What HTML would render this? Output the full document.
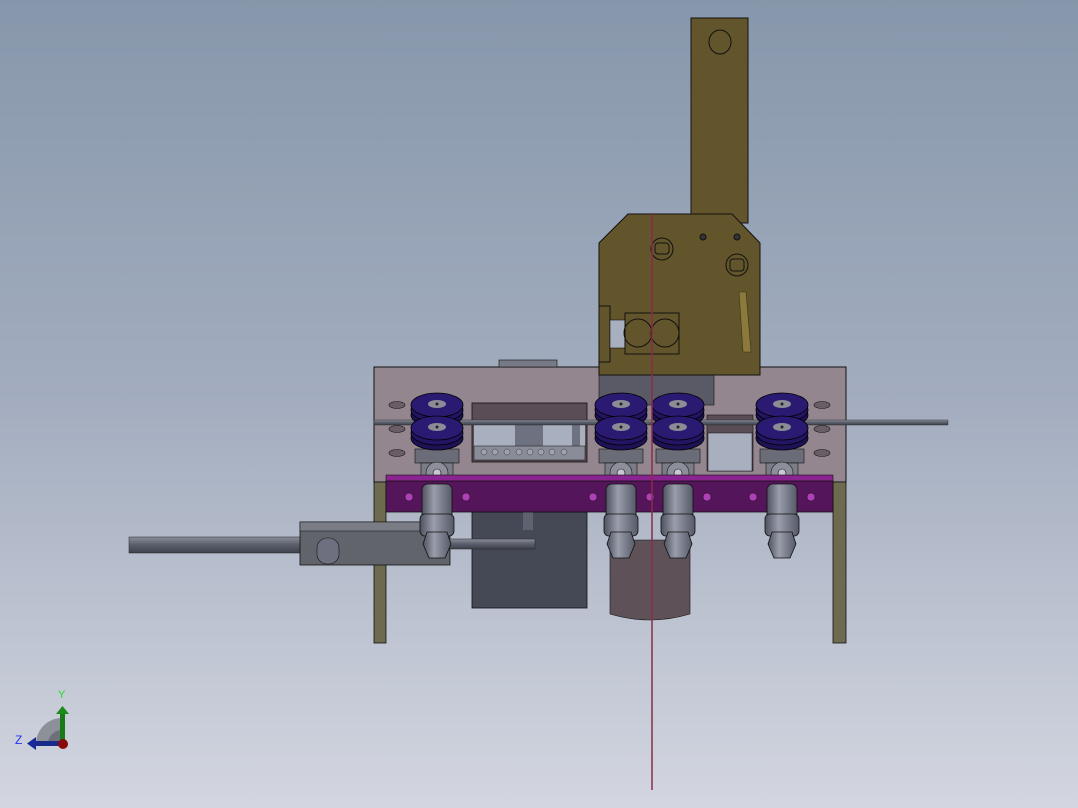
<!DOCTYPE html>
<html><head><style>html,body{margin:0;padding:0;width:1078px;height:808px;overflow:hidden}</style></head>
<body>
<svg width="1078" height="808" viewBox="0 0 1078 808" xmlns="http://www.w3.org/2000/svg">
<defs>
<linearGradient id="bg" x1="0" y1="0" x2="0" y2="1"><stop offset="0" stop-color="#8797ab"/><stop offset="0.5" stop-color="#a3adbf"/><stop offset="1" stop-color="#d3d6e0"/></linearGradient>
<linearGradient id="cyl" x1="0" y1="0" x2="1" y2="0"><stop offset="0" stop-color="#4e5260"/><stop offset="0.4" stop-color="#9a9eab"/><stop offset="1" stop-color="#555968"/></linearGradient>
<linearGradient id="rod" x1="0" y1="0" x2="0" y2="1"><stop offset="0" stop-color="#8a8e9a"/><stop offset="0.5" stop-color="#5a5e6a"/><stop offset="1" stop-color="#3e424c"/></linearGradient>
<g id="pul"><ellipse cx="0" cy="10" rx="26" ry="12" fill="#1e1256" stroke="#000" stroke-width="0.8"/><ellipse cx="0" cy="5" rx="26" ry="12" fill="#241564" stroke="#000" stroke-width="0.8"/><ellipse cx="0" cy="0" rx="26" ry="12" fill="#2b1a72" stroke="#000" stroke-width="0.8"/><ellipse cx="0" cy="-1" rx="9" ry="4" fill="#8c8c96"/><circle cx="0" cy="-1" r="1.5" fill="#222"/></g>
<g id="cy"><rect x="-15" y="0" width="30" height="45" rx="6" fill="url(#cyl)" stroke="#111" stroke-width="0.8"/><rect x="-17" y="30" width="34" height="22" rx="5" fill="url(#cyl)" stroke="#111" stroke-width="0.8"/><path d="M-10 48 h20 l4 12 l-6 14 h-16 l-6-14z" fill="url(#cyl)" stroke="#111" stroke-width="0.8"/></g>
<g id="blk"><rect x="-22" y="0" width="44" height="14" fill="#6a6c78" stroke="#111" stroke-width="0.6"/><rect x="-16" y="14" width="32" height="22" fill="#7a7c88" stroke="#111" stroke-width="0.6"/><circle cx="0" cy="24" r="11" fill="#8c8e9a" stroke="#111" stroke-width="0.6"/><circle cx="0" cy="24" r="4" fill="#c8c8d0" stroke="#111" stroke-width="0.6"/></g>
</defs>
<rect width="1078" height="808" fill="url(#bg)"/>
<!-- arm -->
<rect x="691" y="18" width="57" height="205" fill="#63552b" stroke="#111" stroke-width="1"/>
<ellipse cx="720" cy="42" rx="11" ry="12" fill="none" stroke="#111"/>
<!-- back plate -->
<rect x="374" y="367" width="472" height="115" fill="#93868f" stroke="#111" stroke-width="1"/>
<rect x="499" y="360" width="58" height="7" fill="#777a86" stroke="#111" stroke-width="0.6"/>
<rect x="599" y="375" width="115" height="30" fill="#5a5a66" stroke="#111" stroke-width="0.6"/>
<!-- plate holes -->
<g fill="#6a5e66" stroke="#111" stroke-width="0.6">
<ellipse cx="397" cy="405" rx="8" ry="3.5"/><ellipse cx="397" cy="429" rx="8" ry="3.5"/><ellipse cx="397" cy="453" rx="8" ry="3.5"/>
<ellipse cx="822" cy="405" rx="8" ry="3.5"/><ellipse cx="822" cy="429" rx="8" ry="3.5"/><ellipse cx="822" cy="453" rx="8" ry="3.5"/></g>
<!-- window -->
<rect x="472" y="403" width="115" height="59" fill="#5a4d55" stroke="#111" stroke-width="0.8"/>
<rect x="474" y="420" width="111" height="40" fill="#a8b0c0"/>
<rect x="515" y="425" width="28" height="25" fill="#6e7280"/>
<rect x="572" y="425" width="8" height="30" fill="#6e7280"/>
<rect x="474" y="446" width="111" height="14" fill="#8a8c98" stroke="#111" stroke-width="0.5"/>
<g fill="#a0a2ac" stroke="#222" stroke-width="0.4"><circle cx="484" cy="452" r="3"/><circle cx="495" cy="452" r="3"/><circle cx="507" cy="452" r="3"/><circle cx="519" cy="452" r="3"/><circle cx="530" cy="452" r="3"/><circle cx="541" cy="452" r="3"/><circle cx="552" cy="452" r="3"/><circle cx="564" cy="452" r="3"/></g>
<rect x="707" y="415" width="46" height="56" fill="#5a4d55" stroke="#111" stroke-width="0.6"/>
<rect x="708" y="433" width="44" height="38" fill="#a8b0c0" stroke="#111" stroke-width="0.5"/>
<!-- gold plate -->
<polygon points="628,214 732,214 760,243 760,375 599,375 599,243" fill="#63552b" stroke="#111" stroke-width="1"/>
<rect x="599" y="306" width="11" height="56" fill="#63552b" stroke="#111"/>
<rect x="610" y="320" width="15" height="28" fill="#a8b0c0" stroke="#111" stroke-width="0.6"/>
<rect x="625" y="313" width="54" height="41" fill="none" stroke="#111"/>
<circle cx="638" cy="333" r="14" fill="none" stroke="#111"/><circle cx="665" cy="333" r="14" fill="none" stroke="#111"/>
<ellipse cx="662" cy="249" rx="11" ry="11" fill="none" stroke="#111"/><rect x="655" y="243" width="14" height="11" rx="3" fill="none" stroke="#111"/>
<ellipse cx="737" cy="265" rx="11" ry="11" fill="none" stroke="#111"/><rect x="730" y="259" width="14" height="12" rx="3" fill="none" stroke="#111"/>
<circle cx="703" cy="237" r="3" fill="#333" stroke="#111"/><circle cx="737" cy="237" r="3" fill="#333" stroke="#111"/>
<path d="M739 292 l7 0 l5 60 l-8 0z" fill="#8d7a3a" stroke="#332" stroke-width="0.6"/>
<!-- rod -->
<rect x="374" y="420" width="574" height="5" fill="url(#rod)" stroke="#222" stroke-width="0.4"/>
<!-- pulleys and blocks -->
<use href="#blk" x="437" y="449"/><use href="#blk" x="621" y="449"/><use href="#blk" x="678" y="449"/><use href="#blk" x="782" y="449"/>
<use href="#pul" x="437" y="405"/><use href="#pul" x="437" y="428"/>
<use href="#pul" x="621" y="405"/><use href="#pul" x="621" y="428"/>
<use href="#pul" x="678" y="405"/><use href="#pul" x="678" y="428"/>
<use href="#pul" x="782" y="405"/><use href="#pul" x="782" y="428"/>
<!-- dark box & cylinder -->
<rect x="472" y="512" width="115" height="96" fill="#454855" stroke="#111" stroke-width="0.8"/>
<rect x="523" y="512" width="10" height="18" fill="#5e6270"/>
<path d="M610 540 h80 v74 q-40 12 -80 0z" fill="#5e5258" stroke="#111" stroke-width="0.6"/>
<!-- legs -->
<rect x="374" y="482" width="12" height="161" fill="#6d6a50" stroke="#111" stroke-width="0.8"/>
<rect x="833" y="482" width="13" height="161" fill="#6d6a50" stroke="#111" stroke-width="0.8"/>
<!-- purple bar -->
<rect x="386" y="475" width="447" height="7" fill="#8a2490" stroke="#111" stroke-width="0.6"/>
<rect x="386" y="481" width="447" height="31" fill="#55155a" stroke="#111" stroke-width="0.8"/>
<g fill="#b040b8" stroke="#111" stroke-width="0.5"><circle cx="409" cy="497" r="4"/><circle cx="466" cy="497" r="4"/><circle cx="593" cy="497" r="4"/><circle cx="650" cy="497" r="4"/><circle cx="707" cy="497" r="4"/><circle cx="753" cy="497" r="4"/><circle cx="811" cy="497" r="4"/></g>
<!-- left rod assembly -->
<rect x="129" y="537" width="172" height="16" fill="url(#rod)" stroke="#222" stroke-width="0.5"/>
<rect x="300" y="522" width="150" height="43" fill="#62646c" stroke="#111" stroke-width="0.8"/>
<rect x="300" y="522" width="150" height="9" fill="#7a7c86" stroke="#111" stroke-width="0.5"/>
<rect x="317" y="538" width="22" height="26" rx="10" fill="#6e7080" stroke="#111" stroke-width="0.6"/>
<rect x="440" y="539" width="95" height="10" fill="url(#rod)" stroke="#222" stroke-width="0.5"/>
<!-- cylinders -->
<use href="#cy" x="437" y="484"/><use href="#cy" x="621" y="484"/><use href="#cy" x="678" y="484"/><use href="#cy" x="782" y="484"/>
<!-- red line -->
<line x1="652" y1="213" x2="652" y2="790" stroke="#8b2a4a" stroke-width="1.5"/>
<!-- triad -->
<path d="M36 744 a26 26 0 0 1 26 -26 v26z" fill="#8c9098"/>
<path d="M48 744 a14 14 0 0 1 14 -14 v14z" fill="#6c7078"/>
<rect x="60" y="712" width="5" height="32" fill="#1a7a1a"/><polygon points="56,714 69,714 62.5,706" fill="#1a8a1a"/>
<rect x="34" y="741" width="28" height="5" fill="#1a2a8a"/><polygon points="36,737 36,750 27,743.5" fill="#1a2a9a"/>
<circle cx="63" cy="744" r="5" fill="#8a0a0a"/>
<text x="58" y="698" font-family="Liberation Sans, sans-serif" font-size="11" fill="#22dd22">Y</text>
<text x="15" y="744" font-family="Liberation Sans, sans-serif" font-size="12" fill="#2233ee">Z</text>
</svg>
</body></html>
